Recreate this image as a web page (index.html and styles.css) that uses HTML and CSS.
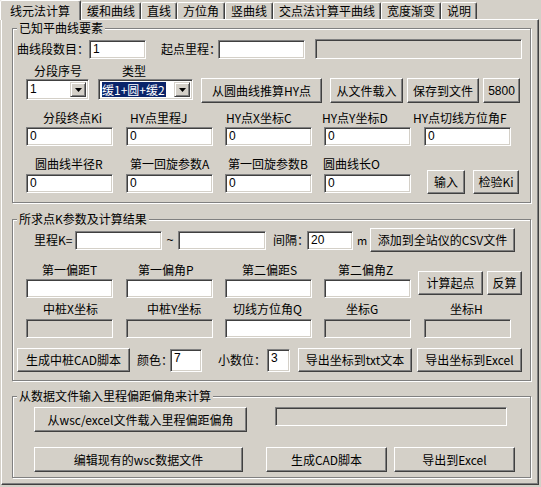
FILE: index.html
```html
<!DOCTYPE html>
<html>
<head>
<meta charset="utf-8">
<title>线元法计算</title>
<link rel="stylesheet" href="styles.css">
</head>
<body>
<div class="tabs">
  <div class="tab sel">线元法计算</div>
  <div class="tab">缓和曲线</div>
  <div class="tab">直线</div>
  <div class="tab">方位角</div>
  <div class="tab">竖曲线</div>
  <div class="tab">交点法计算平曲线</div>
  <div class="tab">宽度渐变</div>
  <div class="tab">说明</div>
</div>
<div class="panel">
  <div class="group g1">
    <span class="gtitle">已知平曲线要素</span>
    <div class="row r1">
      <span class="lab ml4 w72">曲线段数目：</span>
      <div class="edit w57">1</div>
      <span class="lab ml15 w57">起点里程：</span>
      <div class="edit w87"></div>
      <div class="edit dis h20 ml10 w207"></div>
    </div>
    <div class="row r2">
      <span class="lab ml21">分段序号</span>
      <span class="lab ml40">类型</span>
    </div>
    <div class="row r3">
      <div class="combo ml13 w63"><span class="val">1</span><span class="drop"><svg width="7" height="4" viewBox="0 0 7 4"><polygon points="0,0 7,0 3.5,4" fill="#000"/></svg></span></div>
      <div class="combo ml9 w95"><span class="val"><span class="hl">缓1+圆+缓2</span></span><span class="drop"><svg width="7" height="4" viewBox="0 0 7 4"><polygon points="0,0 7,0 3.5,4" fill="#000"/></svg></span></div>
      <div class="btn h25 ml8 w121">从圆曲线推算HY点</div>
      <div class="btn h25 ml8 w73">从文件载入</div>
      <div class="btn h25 ml4 w72">保存到文件</div>
      <div class="btn h25 ml4 w37 num">5800</div>
    </div>
    <div class="grid5 ga">
      <span class="glab lb2 o17">分段终点Ki</span>
      <span class="glab lb2 o4">HY点里程J</span>
      <span class="glab lb2 o1">HY点X坐标C</span>
      <span class="glab lb2 o-2">HY点Y坐标D</span>
      <span class="glab lb2 o-11">HY点切线方位角F</span>
      <div class="edit w87">0</div>
      <div class="edit w87">0</div>
      <div class="edit w87">0</div>
      <div class="edit w87">0</div>
      <div class="edit w87">0</div>
      <div class="bcell bc1">
        <div class="btn h24 w38">输入</div>
        <div class="btn h24 w46">检验Ki</div>
      </div>
      <span class="glab lb3 o9">圆曲线半径R</span>
      <span class="glab lb3 o4">第一回旋参数A</span>
      <span class="glab lb3 o3">第一回旋参数B</span>
      <span class="glab lb3 o-1">圆曲线长O</span>
      <div class="edit w87">0</div>
      <div class="edit w87">0</div>
      <div class="edit w87">0</div>
      <div class="edit w87">0</div>
    </div>
  </div>

  <div class="group g2">
    <span class="gtitle">所求点K参数及计算结果</span>
    <div class="row r4">
      <span class="lab ml21 w41">里程K=</span>
      <div class="edit w87"></div>
      <span class="lab tilde">~</span>
      <div class="edit w88"></div>
      <span class="lab ml7 w34">间隔：</span>
      <div class="edit w46 num">20</div>
      <span class="lab ml4 w13 small">m</span>
      <div class="btn h24 w145">添加到全站仪的CSV文件</div>
    </div>
    <div class="grid5 gb">
      <div class="bcell bc2">
        <div class="btn h24 w65">计算起点</div>
        <div class="btn h24 w35">反算</div>
      </div>
      <span class="glab lb2 o16">第一偏距T</span>
      <span class="glab lb2 o12">第一偏角P</span>
      <span class="glab lb2 o17">第二偏距S</span>
      <span class="glab lb2 o14">第二偏角Z</span>
      <div class="edit w87"></div>
      <div class="edit w87"></div>
      <div class="edit w87"></div>
      <div class="edit w87"></div>
      <span class="glab lb3 o17">中桩X坐标</span>
      <span class="glab lb3 o21">中桩Y坐标</span>
      <span class="glab lb3 o8">切线方位角Q</span>
      <span class="glab lb3 o22">坐标G</span>
      <span class="glab lb3 o26">坐标H</span>
      <div class="edit dis w87"></div>
      <div class="edit dis w87"></div>
      <div class="edit w87"></div>
      <div class="edit dis w87"></div>
      <div class="edit dis w87"></div>
    </div>
    <div class="row r6">
      <div class="btn h24 ml4 w113">生成中桩CAD脚本</div>
      <span class="lab ml7 w33">颜色：</span>
      <div class="edit h23 w32">7</div>
      <span class="lab ml16 w49">小数位：</span>
      <div class="edit h23 w23">3</div>
      <div class="btn h24 ml8 w114">导出坐标到txt文本</div>
      <div class="btn h24 ml5 w105">导出坐标到Excel</div>
    </div>
  </div>

  <div class="group g3">
    <span class="gtitle">从数据文件输入里程偏距偏角来计算</span>
    <div class="row r7">
      <div class="btn h25 ml21 w213">从wsc/excel文件载入里程偏距偏角</div>
      <div class="edit dis ml28 w232"></div>
    </div>
    <div class="row r8">
      <div class="btn h25 ml21 w209">编辑现有的wsc数据文件</div>
      <div class="btn h25 ml23 w121">生成CAD脚本</div>
      <div class="btn h25 ml7 w121">导出到Excel</div>
    </div>
  </div>
</div>
</body>
</html>
```

FILE: styles.css
```css
* { box-sizing: border-box; }

body {
  margin: 0;
  width: 541px;
  height: 487px;
  overflow: hidden;
  background: #d4d0c8;
  color: #000;
  font-family: "Noto Sans CJK SC", "Noto Sans", sans-serif;
  font-size: 12px;
  line-height: 14px;
}

/* ---------- tabs ---------- */
.tabs {
  display: flex;
  align-items: flex-end;
  height: 19px;
  position: relative;
  z-index: 2;
}
.tab {
  height: 17px;
  display: flex;
  align-items: center;
  padding: 0 5px 0 5px;
  border-top: 1px solid #fff;
  border-left: 1px solid #fff;
  border-right: 1px solid #404040;
  box-shadow: inset -1px 0 0 #808080;
  border-radius: 2px 2px 0 0;
  white-space: nowrap;
  background: #d4d0c8;
}
.tab.sel {
  height: 20px;
  margin-bottom: -1px;
  padding: 0 10px 0 9px;
}

/* ---------- panel ---------- */
.panel {
  margin-left: 1px;
  width: 538px;
  height: 466px;
  border: 1px solid;
  border-color: #fff #404040 #404040 #fff;
  box-shadow: inset -1px -1px 0 #808080;
  padding: 8px 0 0 10px;
}

/* ---------- group boxes ---------- */
.group {
  position: relative;
  width: 519px;
  border: 1px solid #808080;
  box-shadow: 1px 1px 0 #fff, inset 1px 1px 0 #fff;
}
.g1 { height: 175px; }
.g2 { height: 162px; margin-top: 16px; }
.g3 { height: 82px; margin-top: 15px; }

.gtitle {
  position: absolute;
  top: -8px;
  left: 4px;
  padding: 0 2px;
  background: #d4d0c8;
  line-height: 14px;
  white-space: nowrap;
}

/* ---------- rows ---------- */
.row { display: flex; align-items: center; }
.r1 { height: 20px; margin-top: 10px; }
.r2 { height: 14px; margin-top: 5px; }
.r3 { height: 25px; align-items: flex-start; }
.r3 .combo { margin-top: 1px; }
.r4 { height: 24px; margin-top: 8px; }
.r6 { height: 24px; margin-top: 10px; }
.r7 { height: 25px; margin-top: 10px; align-items: flex-start; }
.r8 { height: 25px; margin-top: 15px; }

.lab { white-space: nowrap; line-height: 14px; flex: none; }
.tilde { width: 16px; text-align: center; font-family: "Liberation Sans", sans-serif; }
.small { font-size: 11px; }
.num { font-family: "Liberation Sans", sans-serif; }

/* ---------- grids ---------- */
.grid5 {
  display: grid;
  grid-template-columns: 100px 99px 99px 100px 99px;
  margin-left: 13px;
}
.ga { grid-template-rows: 24px 19px 28px 19px; }
.gb { grid-template-rows: 27px 19px 21px 19px; }

.glab { align-self: end; white-space: nowrap; line-height: 14px; }
.lb2 { margin-bottom: 2px; }
.lb3 { margin-bottom: 3px; }

.bcell { display: flex; align-self: end; }
.bc1 {
  grid-column: 5;
  grid-row: 3 / 5;
  margin-left: 3px;
  gap: 8px;
  margin-bottom: -1px;
}
.bc2 {
  grid-column: 5;
  grid-row: 1 / 3;
  margin-left: -6px;
  gap: 4px;
  margin-bottom: 3px;
}

/* ---------- controls ---------- */
.edit {
  flex: none;
  height: 19px;
  background: #fff;
  border: 1px solid;
  border-color: #808080 #fff #fff #808080;
  box-shadow: inset 1px 1px 0 #404040, inset -1px -1px 0 #d4d0c8;
  padding: 1px 0 0 3px;
  font-family: "Liberation Sans", sans-serif;
  font-size: 12px;
  line-height: 15px;
  overflow: hidden;
}
.edit.dis { background: #d4d0c8; }

.btn {
  flex: none;
  display: flex;
  align-items: center;
  justify-content: center;
  background: #d4d0c8;
  border: 1px solid;
  border-color: #fff #404040 #404040 #fff;
  box-shadow: inset -1px -1px 0 #808080;
  white-space: nowrap;
  line-height: 14px;
}

.combo {
  flex: none;
  display: flex;
  height: 21px;
  background: #fff;
  border: 1px solid;
  border-color: #808080 #fff #fff #808080;
  box-shadow: inset 1px 1px 0 #404040, inset -1px -1px 0 #d4d0c8;
  padding: 2px;
}
.combo .val {
  flex: 1;
  padding-left: 1px;
  line-height: 15px;
  font-family: "Liberation Sans", "Noto Sans CJK SC", sans-serif;
  white-space: nowrap;
  overflow: hidden;
}
.combo .hl {
  background: #0a246a;
  color: #fff;
  font-family: "Noto Sans CJK SC", sans-serif;
  padding-right: 1px;
}
.combo .drop {
  width: 16px;
  height: 15px;
  display: flex;
  align-items: center;
  justify-content: center;
  background: #d4d0c8;
  border: 1px solid;
  border-color: #d4d0c8 #404040 #404040 #d4d0c8;
  box-shadow: inset 1px 1px 0 #fff, inset -1px -1px 0 #808080;
}

/* sizes */
.h20 { height: 20px; }
.h23 { height: 23px; }
.h24 { height: 24px; }
.h25 { height: 25px; }

.w13 { width: 13px; }
.w23 { width: 23px; }
.w32 { width: 32px; }
.w33 { width: 33px; }
.w34 { width: 34px; }
.w35 { width: 35px; }
.w37 { width: 37px; }
.w38 { width: 38px; }
.w41 { width: 41px; }
.w46 { width: 46px; }
.w49 { width: 49px; }
.w57 { width: 57px; }
.w63 { width: 63px; }
.w65 { width: 65px; }
.w72 { width: 72px; }
.w73 { width: 73px; }
.w87 { width: 87px; }
.w88 { width: 88px; }
.w95 { width: 95px; }
.w105 { width: 105px; }
.w113 { width: 113px; }
.w114 { width: 114px; }
.w121 { width: 121px; }
.w145 { width: 145px; }
.w207 { width: 207px; }
.w209 { width: 209px; }
.w213 { width: 213px; }
.w232 { width: 232px; }

.ml4 { margin-left: 4px; }
.ml5 { margin-left: 5px; }
.ml7 { margin-left: 7px; }
.ml8 { margin-left: 8px; }
.ml9 { margin-left: 9px; }
.ml10 { margin-left: 10px; }
.ml13 { margin-left: 13px; }
.ml15 { margin-left: 15px; }
.ml16 { margin-left: 16px; }
.ml21 { margin-left: 21px; }
.ml23 { margin-left: 23px; }
.ml28 { margin-left: 28px; }
.ml40 { margin-left: 40px; }

.o-11 { margin-left: -11px; }
.o-2 { margin-left: -2px; }
.o-1 { margin-left: -1px; }
.o1 { margin-left: 1px; }
.o3 { margin-left: 3px; }
.o4 { margin-left: 4px; }
.o8 { margin-left: 8px; }
.o9 { margin-left: 9px; }
.o12 { margin-left: 12px; }
.o14 { margin-left: 14px; }
.o16 { margin-left: 16px; }
.o17 { margin-left: 17px; }
.o21 { margin-left: 21px; }
.o22 { margin-left: 22px; }
.o26 { margin-left: 26px; }
```
